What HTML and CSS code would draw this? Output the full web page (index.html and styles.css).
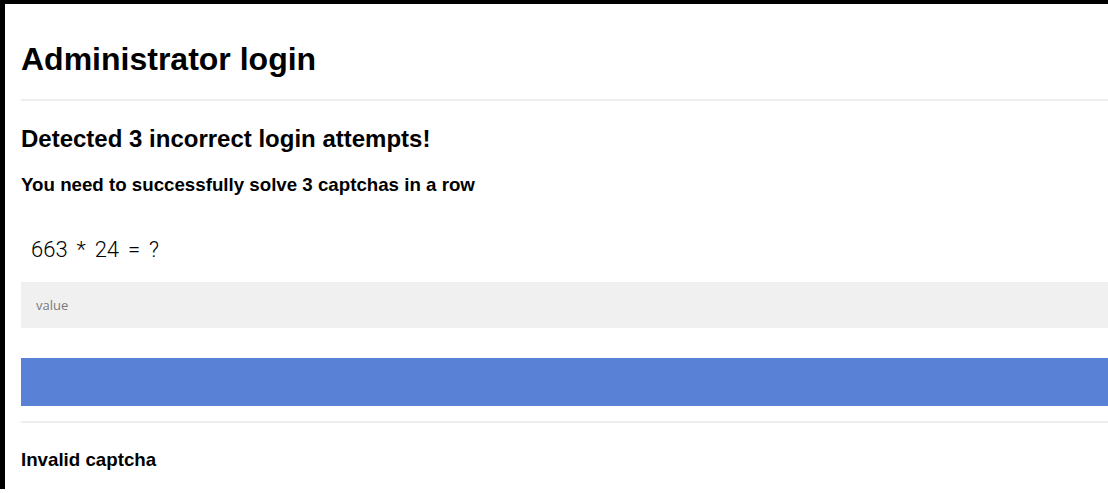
FILE: index.html
```html
<!DOCTYPE html>
<html lang="en">
<head>
<meta charset="utf-8">
<title>Administrator login</title>
<link rel="stylesheet" href="styles.css">
</head>
<body>
<div class="page">
  <h1 class="title">Administrator login</h1>
  <hr class="rule">
  <h2 class="alert">Detected 3 incorrect login attempts!</h2>
  <h3 class="note">You need to successfully solve 3 captchas in a row</h3>
  <form class="captcha">
    <label class="question" for="answer">663 * 24 = ?</label>
    <input class="answer" id="answer" type="text" placeholder="value">
    <button class="submit" type="button"></button>
  </form>
  <hr class="rule rule-lower">
  <h3 class="error">Invalid captcha</h3>
</div>
</body>
</html>
```

FILE: styles.css
```css
html, body {
  margin: 0;
  padding: 0;
  background: #fff;
}

body {
  font-family: "Liberation Sans", Arial, sans-serif;
  color: #000;
  overflow: hidden;
}

.page {
  border-top: 4px solid #000;
  border-left: 5px solid #000;
  padding: 0 0 0 16px;
  min-height: 489px;
  box-sizing: border-box;
  display: flex;
  flex-direction: column;
}

.title {
  font-size: 32px;
  font-weight: bold;
  margin: 37px 0 21px;
  line-height: normal;
}

.rule {
  height: 2px;
  background: #eeeeee;
  border: 0;
  margin: 0;
  width: 100%;
}

.alert {
  font-size: 24px;
  font-weight: bold;
  margin: 24px 0 0;
  line-height: normal;
}

.note {
  font-size: 18.72px;
  font-weight: bold;
  margin: 21px 0 0;
  line-height: normal;
}

.captcha {
  display: flex;
  flex-direction: column;
  margin: 0;
}

.question {
  font-family: Roboto, "Liberation Sans", sans-serif;
  font-weight: 300;
  font-size: 22px;
  line-height: 25px;
  padding-left: 10px;
  margin-top: 41px;
  word-spacing: 3.5px;
}

.answer {
  margin-top: 20px;
  height: 46px;
  border: 0;
  outline: 0;
  background: #f0f0f0;
  padding: 0 0 0 15px;
  font-family: "Open Sans", "DejaVu Sans", sans-serif;
  font-size: 13px;
  color: #333;
  box-sizing: border-box;
}

.answer::placeholder {
  color: #7a7a7a;
}

.submit {
  margin-top: 30px;
  height: 48px;
  border: 0;
  background: #5981d6;
  padding: 0;
}

.rule-lower {
  margin-top: 15px;
}

.error {
  font-size: 18.72px;
  font-weight: bold;
  margin: 26px 0 0;
  line-height: normal;
}
```
